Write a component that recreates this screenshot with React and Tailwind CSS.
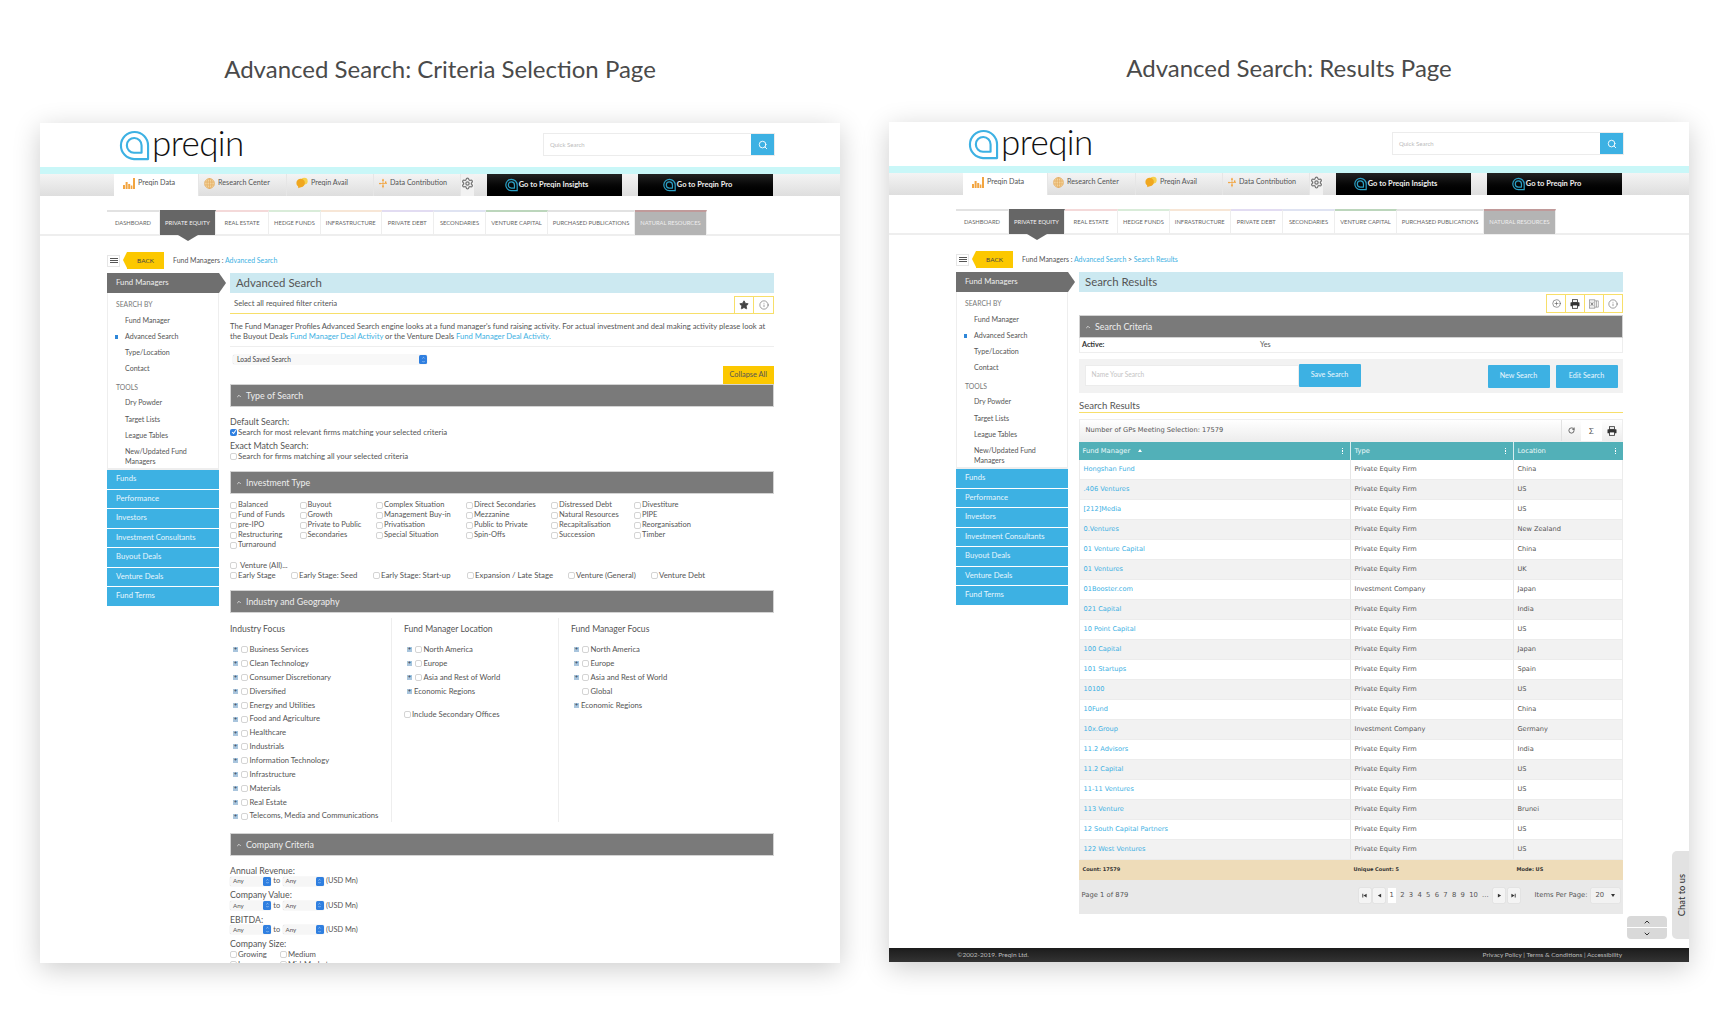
import React from "react";
import { ChevronDown, ChevronUp, CirclePlus, Info, RotateCw, Search, Settings, Star } from "lucide-react";

const BLUE = "text-[#3db1e3]";

const SIDE_SEARCH = ["Fund Manager", "Advanced Search", "Type/Location", "Contact"];
const SIDE_TOOLS = ["Dry Powder", "Target Lists", "League Tables"];
const SIDE_BLUE = ["Funds", "Performance", "Investors", "Investment Consultants", "Buyout Deals", "Venture Deals", "Fund Terms"];

const NAV = [
  ["DASHBOARD", "w-[53px]", "border-t-[#e2e2e2]"],
  ["PRIVATE EQUITY", "w-[56px]", "border-t-[#666666]"],
  ["REAL ESTATE", "w-[53px]", "border-t-[#f4d9d9]"],
  ["HEDGE FUNDS", "w-[52px]", "border-t-[#d9ecd9]"],
  ["INFRASTRUCTURE", "w-[60.5px]", "border-t-[#f7e6d6]"],
  ["PRIVATE DEBT", "w-[52.5px]", "border-t-[#e2dcf2]"],
  ["SECONDARIES", "w-[52px]", "border-t-[#dfe3f2]"],
  ["VENTURE CAPITAL", "w-[62px]", "border-t-[#bcd6bc]"],
  ["PURCHASED PUBLICATIONS", "w-[87px]", "border-t-[#e2e2e2]"],
  ["NATURAL RESOURCES", "w-[72px]", "border-t-[#c09a9a]"],
];

const INVEST = [
  ["Balanced", "Buyout", "Complex Situation", "Direct Secondaries", "Distressed Debt", "Divestiture"],
  ["Fund of Funds", "Growth", "Management Buy-in", "Mezzanine", "Natural Resources", "PIPE"],
  ["pre-IPO", "Private to Public", "Privatisation", "Public to Private", "Recapitalisation", "Reorganisation"],
  ["Restructuring", "Secondaries", "Special Situation", "Spin-Offs", "Succession", "Timber"],
  ["Turnaround"],
];

const VENTURE = ["Early Stage", "Early Stage: Seed", "Early Stage: Start-up", "Expansion / Late Stage", "Venture (General)", "Venture Debt"];

const INDUSTRY = [
  "Business Services", "Clean Technology", "Consumer Discretionary", "Diversified", "Energy and Utilities",
  "Food and Agriculture", "Healthcare", "Industrials", "Information Technology", "Infrastructure",
  "Materials", "Real Estate", "Telecoms, Media and Communications",
];

const ROWS = [
  ["Hongshan Fund", "Private Equity Firm", "China"],
  [".406 Ventures", "Private Equity Firm", "US"],
  ["[212]Media", "Private Equity Firm", "US"],
  ["0.Ventures", "Private Equity Firm", "New Zealand"],
  ["01 Venture Capital", "Private Equity Firm", "China"],
  ["01 Ventures", "Private Equity Firm", "UK"],
  ["01Booster.com", "Investment Company", "Japan"],
  ["021 Capital", "Private Equity Firm", "India"],
  ["10 Point Capital", "Private Equity Firm", "US"],
  ["100 Capital", "Private Equity Firm", "Japan"],
  ["101 Startups", "Private Equity Firm", "Spain"],
  ["10100", "Private Equity Firm", "US"],
  ["10Fund", "Private Equity Firm", "China"],
  ["10x.Group", "Investment Company", "Germany"],
  ["11.2 Advisors", "Private Equity Firm", "India"],
  ["11.2 Capital", "Private Equity Firm", "US"],
  ["11-11 Ventures", "Private Equity Firm", "US"],
  ["113 Venture", "Private Equity Firm", "Brunei"],
  ["12 South Capital Partners", "Private Equity Firm", "US"],
  ["122 West Ventures", "Private Equity Firm", "US"],
];

const Mark = ({ className, color = "#3db1e3", width = 2.2 }) => (
  <svg viewBox="0 0 32 32" className={className} fill="none" stroke={color} strokeWidth={width}>
    <path d="M15.5 30 A14 14 0 1 1 30 16 V30 Z" strokeLinejoin="round" />
    <path d="M15.5 23.5 A7.6 7.6 0 1 1 23.3 16 V23.5 Z" strokeLinejoin="round" />
  </svg>
);

const PrintIcon = ({ className }) => (
  <svg viewBox="0 0 12 12" className={className}>
    <rect x="3" y="0.8" width="6" height="3.2" fill="none" stroke="#333" strokeWidth="1" />
    <rect x="0.6" y="3.8" width="10.8" height="5" rx="0.8" fill="#333" />
    <rect x="3" y="7.2" width="6" height="4" fill="#fff" stroke="#333" strokeWidth="1" />
  </svg>
);

const Box = ({ checked }) =>
  checked ? (
    <span className="flex w-[7px] h-[7px] shrink-0 items-center justify-center rounded-[2px] bg-[#2f7fe0]">
      <svg viewBox="0 0 8 8" className="w-[6px] h-[6px]" fill="none" stroke="#fff" strokeWidth="1.4">
        <path d="M1.5 4 L3.4 6 L6.5 1.6" />
      </svg>
    </span>
  ) : (
    <span className="block w-[7px] h-[7px] shrink-0 rounded-[2px] border border-[#d4d4d4] bg-white" />
  );

const Check = ({ label, checked, size = "text-[7.5px]" }) => (
  <div className={`flex items-center gap-px whitespace-nowrap leading-[10px] text-[#555] ${size}`}>
    <Box checked={checked} />
    <span>{label}</span>
  </div>
);

const TreeItem = ({ label, box = true }) => (
  <div className="flex h-[13.86px] items-center whitespace-nowrap text-[7.7px] text-[#555]">
    <span className="flex w-[5px] h-[5px] shrink-0 items-center justify-center bg-[#a9c5dd] text-[5px] leading-none text-[#234]">+</span>
    {box ? (
      <span className="ml-[3px] mr-[1.5px]"><Box /></span>
    ) : (
      <span className="ml-[2px]" />
    )}
    <span>{label}</span>
  </div>
);

const SectionBar = ({ title }) => (
  <div className="flex h-[23px] items-center gap-[4px] border border-[#d3d3d3] bg-[#7a7a7a] pl-[5px] text-[8.9px] text-[#eee]">
    <ChevronUp className="w-[6px] h-[6px]" strokeWidth={3} />
    <span>{title}</span>
  </div>
);

const Stepper = ({ className }) => (
  <span className={`flex flex-col items-center justify-center rounded-[1.5px] bg-[#2f7fe0] ${className}`}>
    <ChevronUp className="w-[5px] h-[3.5px] text-white" strokeWidth={3} />
    <ChevronDown className="w-[5px] h-[3.5px] text-white" strokeWidth={3} />
  </span>
);

const AnySelect = () => (
  <span className="flex h-[9px] w-[41px] items-center justify-between rounded-[1.5px] bg-[#f6f6f6] pl-[3px] text-[6.2px] shadow-[0_0_1px_rgba(0,0,0,0.3)]">
    Any
    <Stepper className="w-[8px] h-[9px]" />
  </span>
);

const RangeRow = ({ label }) => (
  <div className="mt-[4.4px] text-[#555]">
    <div className="text-[8.8px] leading-[10px]">{label}</div>
    <div className="flex h-[10px] items-center text-[7.4px]">
      <AnySelect />
      <span className="w-[11.5px] text-center">to</span>
      <AnySelect />
      <span className="ml-[2.5px]">(USD Mn)</span>
    </div>
  </div>
);

const GoButton = ({ label }) => (
  <div className="flex h-[22px] w-[135px] items-center justify-center gap-[1px] bg-gradient-to-b from-[#232323] to-[#000] pr-[16px] text-[7.5px] font-bold text-[#eee]">
    <Mark className="w-[13px] h-[14px]" color="#2a9fc4" width={3} />
    <span className="whitespace-nowrap">{label}</span>
  </div>
);

const TabIcon = ({ name }) => {
  if (name === "bars")
    return (
      <svg viewBox="0 0 12 11" className="w-[12px] h-[11px]" fill="#f2a541">
        <rect x="0" y="7" width="2" height="4" />
        <rect x="2.6" y="4" width="2" height="7" />
        <rect x="5.2" y="6" width="2" height="5" />
        <rect x="7.8" y="7.5" width="1.6" height="3.5" />
        <rect x="10" y="0" width="2" height="11" />
      </svg>
    );
  if (name === "globe")
    return (
      <svg viewBox="0 0 12 12" className="w-[11px] h-[11px]" fill="#f3d39b" stroke="#e3a95c" strokeWidth="0.7">
        <circle cx="6" cy="6" r="5.4" />
        <path d="M0.8 4.4H11.2M0.8 7.6H11.2M6 0.6V11.4" fill="none" />
        <ellipse cx="6" cy="6" rx="2.6" ry="5.4" fill="none" />
      </svg>
    );
  if (name === "chat")
    return (
      <svg viewBox="0 0 13 12" className="w-[12px] h-[12px]">
        <circle cx="9" cy="4" r="3.6" fill="#f6d04d" />
        <circle cx="5" cy="6" r="4.6" fill="#f0a71f" />
        <path d="M2.5 8.5 L2.4 11.6 L6 10 Z" fill="#f0a71f" />
      </svg>
    );
  return (
    <svg viewBox="0 0 12 14" className="w-[8px] h-[13px]" fill="#f2a541">
      <rect x="5.4" y="0" width="1.2" height="14" />
      <rect x="0" y="6.4" width="12" height="1.2" />
      <circle cx="6" cy="2" r="1.3" />
      <circle cx="1.5" cy="7" r="1.3" />
      <circle cx="10" cy="5" r="1.3" />
      <circle cx="6" cy="11" r="1.3" />
    </svg>
  );
};

const TABS = [
  ["Preqin Data", "bars", "w-[85px] pl-[9px]"],
  ["Research Center", "globe", "w-[88px] pl-[5px]"],
  ["Preqin Avail", "chat", "w-[87px] pl-[9px]"],
  ["Data Contribution", "dots", "w-[87px] pl-[5px]"],
];

const Sidebar = () => (
  <div className="w-[112px] shrink-0">
    <div className="relative flex h-[20px] items-center bg-[#6f6f6f] pl-[9px] text-[7.8px] text-[#eee]">
      Fund Managers
      <span className="absolute left-full top-0 border-y-[10px] border-l-[7px] border-y-transparent border-l-[#6f6f6f]" />
    </div>
    <div className="h-[177px] border-x border-b-2 border-[#eeeeee] pt-[6px] text-[7.1px] leading-[10px] text-[#555]">
      <div className="h-[11px] pl-[8px] text-[6.8px] text-[#777]">SEARCH BY</div>
      {SIDE_SEARCH.map((s) => (
        <div key={s} className="relative mt-[6.1px] pl-[17px]">
          {s === "Advanced Search" && <span className="absolute left-[7px] top-[3px] h-[4px] w-[3px] bg-[#2f87d8]" />}
          {s}
        </div>
      ))}
      <div className="mt-[8px] h-[10px] pl-[8px] text-[6.8px] text-[#777]">TOOLS</div>
      {SIDE_TOOLS.map((s) => (
        <div key={s} className="mt-[6.1px] pl-[17px]">{s}</div>
      ))}
      <div className="mt-[6.1px] pl-[17px] pr-[10px]">New/Updated Fund Managers</div>
    </div>
    <div className="flex flex-col gap-[1px]">
      {SIDE_BLUE.map((s) => (
        <div key={s} className="flex h-[18.5px] items-center bg-[#3db1e3] pl-[9px] text-[7.7px] text-[#e6f6fd]">{s}</div>
      ))}
    </div>
  </div>
);

const Chrome = ({ crumb, children, footer, extra }) => (
  <div className="relative flex h-[840px] w-[800px] flex-col bg-white shadow-[0_6px_26px_rgba(0,0,0,0.2)]">
    <div className="flex h-[44px] shrink-0 items-start justify-between pl-[79px] pr-[65px]">
      <div className="flex items-start">
        <Mark className="mt-[7px] w-[31px] h-[31px]" />
        <span className="ml-[2px] font-['Lato',sans-serif] text-[35px] font-light leading-[38px] tracking-[-0.6px] text-[#111]">preqin</span>
      </div>
      <div className="mt-[10px] flex h-[23px] w-[232px] border border-[#ececec] bg-white">
        <span className="flex-1 pl-[6px] text-[6px] leading-[21px] text-[#bbb]">Quick Search</span>
        <span className="flex w-[23px] items-center justify-center bg-[#3db1e3]">
          <Search className="w-[10px] h-[10px] text-white" strokeWidth={2.2} />
        </span>
      </div>
    </div>
    <div className="h-[7px] shrink-0 bg-[#c9f7f8]" />
    <div className="flex h-[22px] shrink-0 bg-gradient-to-b from-[#f4f4f4] to-[#dedede] pl-[74px]">
      {TABS.map(([label, icon, w], i) => (
        <div
          key={label}
          className={`flex items-center gap-[3px] border-r border-[#e6e6e6] pb-[4px] text-[7.2px] text-[#555] ${w} ${i === 0 ? "bg-white" : ""}`}
        >
          <TabIcon name={icon} />
          <span className="whitespace-nowrap">{label}</span>
        </div>
      ))}
      <div className="flex w-[13px] items-start justify-center bg-[#f2f2f2] pt-[3px]">
        <Settings className="w-[13px] h-[13px] text-[#777]" strokeWidth={2.4} />
      </div>
      <div className="ml-[13px] flex gap-[16px]">
        <GoButton label="Go to Preqin Insights" />
        <GoButton label="Go to Preqin Pro" />
      </div>
    </div>
    <div className="mt-[14px] flex h-[26px] shrink-0 border-b-2 border-[#eeeeee] pl-[67px]">
      {NAV.map(([label, w, tone]) => (
        <div
          key={label}
          className={`relative flex h-[25px] items-center justify-center whitespace-nowrap border-t-2 border-r border-r-[#eeeeee] text-[5.8px] ${w} ${tone} ${
            label === "PRIVATE EQUITY" ? "bg-[#666666] text-[#f2f2f2]" : label === "NATURAL RESOURCES" ? "bg-[#b4b4b4] text-[#eee]" : "text-[#666]"
          }`}
        >
          {label}
          {label === "PRIVATE EQUITY" && (
            <span className="absolute left-1/2 top-full -ml-[10px] border-x-[10px] border-t-[6px] border-x-transparent border-t-[#666666]" />
          )}
        </div>
      ))}
    </div>
    <div className="ml-[67px] mt-[16px] flex h-[17px] shrink-0 items-center">
      <span className="flex h-[12px] w-[13px] flex-col items-center justify-center gap-[1px] border border-[#e6e6e6]">
        <span className="block h-[1.2px] w-[8px] bg-[#555]" />
        <span className="block h-[1.2px] w-[8px] bg-[#555]" />
        <span className="block h-[1.2px] w-[8px] bg-[#555]" />
      </span>
      <span className="relative ml-[7px] flex h-[17px] w-[37px] items-center justify-center bg-[#fcc800] text-[6.4px] text-[#444]">
        BACK
        <span className="absolute right-full top-0 border-y-[8.5px] border-r-[4px] border-y-transparent border-r-[#fcc800]" />
      </span>
      <span className="ml-[9px] text-[6.95px] text-[#555]">{crumb}</span>
    </div>
    <div className="mt-[4px] min-h-0 flex-1 overflow-hidden pl-[67px] pr-[66px]">
      <div className="flex gap-[11px]">
        <Sidebar />
        <div className="min-w-0 flex-1">{children}</div>
      </div>
    </div>
    {extra}
    {footer}
  </div>
);

const CriteriaPage = () => (
  <div className="text-[#555]">
    <div className="flex h-[20px] items-center bg-[#cce9f1] pl-[6px] text-[11.4px] text-[#555]">Advanced Search</div>
    <div className="mt-[3px] flex h-[18px] justify-between border-b border-[#f7df6a]">
      <span className="pl-[4px] pt-[2px] text-[7.7px] leading-[10px]">Select all required filter criteria</span>
      <div className="flex">
        <span className="flex w-[20px] items-center justify-center border-x border-t border-[#f7df6a]">
          <Star className="w-[10px] h-[10px] fill-[#444] text-[#444]" />
        </span>
        <span className="flex w-[20px] items-center justify-center border-r border-t border-[#f7df6a]">
          <Info className="w-[10px] h-[10px] text-[#666]" strokeWidth={1.5} />
        </span>
      </div>
    </div>
    <p className="mt-[7px] w-[546px] text-[7.67px] leading-[10px]">
      The Fund Manager Profiles Advanced Search engine looks at a fund manager's fund raising activity. For actual investment and deal making activity please look at the Buyout Deals <span className={BLUE}>Fund Manager Deal Activity</span> or the Venture Deals <span className={BLUE}>Fund Manager Deal Activity.</span>
    </p>
    <div className="mt-[5px] border-t border-[#eeeeee] pt-[8px] pl-[3px]">
      <div className="flex h-[9px] w-[194px] items-center justify-between rounded-[1.5px] bg-[#f8f8f8] pl-[4px] text-[6.6px] text-[#444] shadow-[0_0_1px_rgba(0,0,0,0.3)]">
        Load Saved Search
        <Stepper className="w-[8px] h-[9px]" />
      </div>
    </div>
    <div className="mt-[2px] flex justify-end">
      <span className="flex h-[18px] w-[51.5px] items-center justify-center bg-[#fcc800] text-[7.4px]">Collapse All</span>
    </div>
    <SectionBar title="Type of Search" />
    <div className="mt-[10px] text-[8.8px] leading-[10px]">Default Search:</div>
    <Check checked size="text-[7.8px]" label="Search for most relevant firms matching your selected criteria" />
    <div className="mt-[4px] text-[8.8px] leading-[10px]">Exact Match Search:</div>
    <Check size="text-[7.8px]" label="Search for firms matching all your selected criteria" />
    <div className="mt-[10px]"><SectionBar title="Investment Type" /></div>
    <div className="mt-[6px] grid grid-cols-[69.5px_76.5px_90px_85px_83px_1fr]">
      {INVEST.flat().map((t) => <Check key={t} label={t} />)}
    </div>
    <div className="mt-[10px] flex items-center gap-[3px] text-[7.8px] leading-[10px]">
      <Box />
      <span>Venture (All)...</span>
    </div>
    <div className="grid grid-cols-[61px_82px_94px_101px_83px_1fr]">
      {VENTURE.map((t) => <Check key={t} size="text-[7.8px]" label={t} />)}
    </div>
    <div className="mt-[10px]"><SectionBar title="Industry and Geography" /></div>
    <div className="mt-[5px] flex h-[204px]">
      <div className="w-[162px] border-r border-[#eeeeee] pt-[6px]">
        <div className="text-[8.6px] leading-[10px]">Industry Focus</div>
        <div className="mt-[9px] pl-[3px]">
          {INDUSTRY.map((t) => <TreeItem key={t} label={t} />)}
        </div>
      </div>
      <div className="w-[167px] border-r border-[#eeeeee] pl-[12px] pt-[6px]">
        <div className="text-[8.6px] leading-[10px]">Fund Manager Location</div>
        <div className="mt-[9px] pl-[3px]">
          <TreeItem label="North America" />
          <TreeItem label="Europe" />
          <TreeItem label="Asia and Rest of World" />
          <TreeItem label="Economic Regions" box={false} />
        </div>
        <div className="mt-[11px]"><Check size="text-[7.7px]" label="Include Secondary Offices" /></div>
      </div>
      <div className="pl-[12px] pt-[6px]">
        <div className="text-[8.6px] leading-[10px]">Fund Manager Focus</div>
        <div className="mt-[9px] pl-[3px]">
          <TreeItem label="North America" />
          <TreeItem label="Europe" />
          <TreeItem label="Asia and Rest of World" />
          <div className="flex h-[13.86px] items-center text-[7.7px]">
            <span className="ml-[8px] mr-[1.5px]"><Box /></span>Global
          </div>
          <TreeItem label="Economic Regions" box={false} />
        </div>
      </div>
    </div>
    <div className="mt-[11px]"><SectionBar title="Company Criteria" /></div>
    <div className="mt-[10px]">
      <RangeRow label="Annual Revenue:" />
      <RangeRow label="Company Value:" />
      <RangeRow label="EBITDA:" />
    </div>
    <div className="mt-[4.4px] text-[8.8px] leading-[10px]">Company Size:</div>
    <div className="grid w-[100px] grid-cols-[50px_50px]">
      <Check size="text-[7.7px]" label="Growing" />
      <Check size="text-[7.7px]" label="Medium" />
      <Check size="text-[7.7px]" label="Large" />
      <Check size="text-[7.7px]" label="Mid-Market" />
    </div>
  </div>
);

const IconCell = ({ children }) => (
  <span className="-ml-px flex w-[20px] items-center justify-center border border-[#f7df6a] first:ml-0">{children}</span>
);

const ExcelIcon = () => (
  <svg viewBox="0 0 12 12" className="w-[10px] h-[10px]" fill="none" stroke="#888" strokeWidth="0.8">
    <rect x="0.5" y="1" width="6.5" height="10" fill="#eee" />
    <path d="M7 2.2H11.2V9.8H7M9 2.2V9.8" />
    <path d="M2.2 4.2L5 8M5 4.2L2.2 8" stroke="#555" />
  </svg>
);

const Dots = () => (
  <span className="flex flex-col gap-[1px]">
    <span className="block h-[1.5px] w-[1.5px] bg-white" />
    <span className="block h-[1.5px] w-[1.5px] bg-white" />
    <span className="block h-[1.5px] w-[1.5px] bg-white" />
  </span>
);

const Pager = ({ kind }) => (
  <span className="flex h-[15px] w-[12px] items-center justify-center rounded-[1px] bg-[#f4f4f4] shadow-[0_0_1px_rgba(0,0,0,0.25)]">
    <svg viewBox="0 0 8 8" className="w-[5px] h-[5px]" fill="#333">
      {kind === "first" && <path d="M0.6 1H2V7H0.6ZM7.4 1V7L2.4 4Z" />}
      {kind === "prev" && <path d="M6.6 1V7L1.4 4Z" />}
      {kind === "next" && <path d="M1.4 1V7L6.6 4Z" />}
      {kind === "last" && <path d="M0.6 1V7L5.6 4ZM6 1H7.4V7H6Z" />}
    </svg>
  </span>
);

const CELL = "flex items-center pl-[3.5px] font-['DejaVu_Sans',sans-serif] text-[6.6px]";

const ResultsPage = () => (
  <div className="text-[#555]">
    <div className="flex h-[20px] items-center bg-[#cce9f1] pl-[6px] text-[11.4px]">Search Results</div>
    <div className="mt-[2px] flex h-[19px] justify-end">
      <IconCell><CirclePlus className="w-[9px] h-[9px] text-[#555]" strokeWidth={1.6} /></IconCell>
      <IconCell><PrintIcon className="w-[10px] h-[10px]" /></IconCell>
      <IconCell><ExcelIcon /></IconCell>
      <IconCell><Info className="w-[10px] h-[10px] text-[#666]" strokeWidth={1.5} /></IconCell>
    </div>
    <div className="mt-[2px]"><SectionBar title="Search Criteria" /></div>
    <div className="flex h-[15px] items-center border-x border-b border-[#eeeeee] pl-[2px] text-[7.2px]">
      <span className="w-[178px] font-bold text-[#333]">Active:</span>
      <span>Yes</span>
    </div>
    <div className="mt-[6px] flex h-[34px] items-center justify-between bg-[#f2f2f2] px-[5.5px]">
      <div className="flex">
        <span className="flex h-[21px] w-[214px] items-center border border-[#ececec] bg-white pl-[6px] text-[6.6px] text-[#c4c4c4]">Name Your Search</span>
        <span className="flex h-[23px] w-[62px] -translate-y-px items-center justify-center rounded-[1px] bg-[#3db1e3] text-[7.2px] text-[#eaf7fd]">Save Search</span>
      </div>
      <div className="flex gap-[6px]">
        <span className="flex h-[23px] w-[62px] items-center justify-center rounded-[1px] bg-[#3db1e3] text-[7.2px] text-[#eaf7fd]">New Search</span>
        <span className="flex h-[23px] w-[62px] items-center justify-center rounded-[1px] bg-[#3db1e3] text-[7.2px] text-[#eaf7fd]">Edit Search</span>
      </div>
    </div>
    <div className="mt-[6px] flex h-[14px] items-center border-b border-[#f7df6a] text-[9.6px] leading-[12px]">Search Results</div>
    <div className="mt-[6px] flex h-[23px] items-stretch justify-between border border-[#eeeeee] bg-gradient-to-b from-[#ffffff] to-[#ededed]">
      <span className="flex items-center pl-[5.5px] font-['DejaVu_Sans',sans-serif] text-[6.7px]">Number of GPs Meeting Selection: 17579</span>
      <div className="flex">
        <span className="flex w-[20px] items-center justify-center border-l border-[#e2e2e2]"><RotateCw className="w-[7px] h-[7px] text-[#333]" strokeWidth={2.4} /></span>
        <span className="flex w-[21px] items-center justify-center bg-white text-[8px] text-[#555]">Σ</span>
        <span className="flex w-[20px] items-center justify-center"><PrintIcon className="w-[10px] h-[10px]" /></span>
      </div>
    </div>
    <div className="grid h-[18px] grid-cols-[271px_163px_1fr] bg-[#52b0b8] text-[#eefafa]">
      {["Fund Manager", "Type", "Location"].map((h, i) => (
        <div key={h} className={`flex items-center justify-between pr-[7px] ${i > 0 ? "border-l border-[#d8eef0]" : ""} pl-[3.5px] font-['DejaVu_Sans',sans-serif] text-[6.7px]`}>
          <span className="flex items-center gap-[8px]">
            {h}
            {i === 0 && <span className="border-x-[2px] border-b-[3px] border-x-transparent border-b-white" />}
          </span>
          <Dots />
        </div>
      ))}
    </div>
    {ROWS.map(([name, type, loc], i) => (
      <div key={name} className={`grid h-[20px] grid-cols-[270px_163px_1fr] border-x border-b border-[#ececec] ${i % 2 ? "bg-[#f2f2f2]" : "bg-white"}`}>
        <div className={`${CELL} ${BLUE}`}>{name}</div>
        <div className={`${CELL} border-l border-[#e6e6e6]`}>{type}</div>
        <div className={`${CELL} border-l border-[#e6e6e6]`}>{loc}</div>
      </div>
    ))}
    <div className="grid h-[20px] grid-cols-[271px_163px_1fr] bg-[#eedcb9] font-['DejaVu_Sans',sans-serif] text-[5px] font-bold text-[#333]">
      <div className="flex items-center pl-[3.5px]">Count: 17579</div>
      <div className="flex items-center pl-[3.5px]">Unique Count: 5</div>
      <div className="flex items-center pl-[3.5px]">Mode: US</div>
    </div>
    <div className="flex h-[34px] items-start justify-between bg-[#e9e9e9] px-[2.5px] pt-[8px] font-['DejaVu_Sans',sans-serif] text-[6.8px]">
      <span className="leading-[15px]">Page 1 of 879</span>
      <div className="flex items-center pr-[1px]">
        <div className="flex items-center gap-[2.5px]">
          <Pager kind="first" />
          <Pager kind="prev" />
          <span className="flex h-[15px] w-[8px] items-center justify-center bg-white">1</span>
          <span className="flex items-center gap-[4.3px] px-[2px]">
            {["2", "3", "4", "5", "6", "7", "8", "9", "10", "..."].map((p) => <span key={p}>{p}</span>)}
          </span>
          <Pager kind="next" />
          <Pager kind="last" />
        </div>
        <span className="ml-[15px]">Items Per Page:</span>
        <span className="ml-[3px] flex h-[15px] w-[29px] items-center justify-between rounded-[1px] bg-[#f2f2f2] px-[5px] shadow-[0_0_1px_rgba(0,0,0,0.2)]">
          20
          <span className="border-x-[2px] border-t-[3px] border-x-transparent border-t-[#333]" />
        </span>
      </div>
    </div>
  </div>
);

const FloatingTools = () => (
  <>
    <div className="absolute bottom-[23px] right-[22px] flex w-[40px] flex-col gap-[1px]">
      <span className="flex h-[11px] items-center justify-center rounded-t-[4px] bg-[#d9d9d9]"><ChevronUp className="w-[8px] h-[8px] text-[#333]" strokeWidth={3} /></span>
      <span className="flex h-[11px] items-center justify-center rounded-b-[4px] bg-[#d9d9d9]"><ChevronDown className="w-[8px] h-[8px] text-[#333]" strokeWidth={3} /></span>
    </div>
    <div className="absolute bottom-[23px] right-0 flex h-[88px] w-[17px] items-center justify-center rounded-l-[5px] bg-[#e2e2e2] pl-[3px]">
      <span className="-rotate-90 whitespace-nowrap text-[9.4px] font-medium text-[#333]">Chat to us</span>
    </div>
  </>
);

const Footer = () => (
  <div className="flex h-[14px] shrink-0 items-center justify-between bg-gradient-to-b from-[#1c1c1c] to-[#333] pl-[68px] pr-[67px] text-[6.5px] text-[#bbb]">
    <span>©2002-2019. Preqin Ltd.</span>
    <span>Privacy Policy | Terms &amp; Conditions | Accessibility</span>
  </div>
);

export default function App() {
  return (
    <div className="flex h-[1016px] w-[1720px] gap-[49px] overflow-hidden bg-white pl-[40px] font-['Lato',sans-serif]">
      <div className="w-[800px]">
        <h2 className="h-[123px] pt-[53px] text-center text-[24px] font-normal leading-[32px] text-[#4a4a4a]">Advanced Search: Criteria Selection Page</h2>
        <Chrome crumb={<>Fund Managers : <span className={BLUE}>Advanced Search</span></>}>
          <CriteriaPage />
        </Chrome>
      </div>
      <div className="w-[800px]">
        <h2 className="h-[122px] pt-[52px] text-center text-[24px] font-normal leading-[32px] text-[#4a4a4a]">Advanced Search: Results Page</h2>
        <Chrome
          crumb={<>Fund Managers : <span className={BLUE}>Advanced Search</span> &gt; <span className={BLUE}>Search Results</span></>}
          extra={<FloatingTools />}
          footer={<Footer />}
        >
          <ResultsPage />
        </Chrome>
      </div>
    </div>
  );
}
